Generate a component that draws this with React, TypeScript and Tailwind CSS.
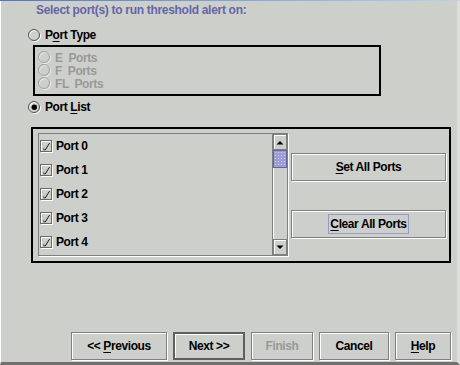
import React from 'react';

const ports = ['Port 0', 'Port 1', 'Port 2', 'Port 3', 'Port 4'];

function Radio({ checked = false, disabled = false }: { checked?: boolean; disabled?: boolean }) {
  const dark = disabled ? '#9c9c9c' : '#505050';
  const light = disabled ? '#f0f0f0' : '#ffffff';
  return (
    <svg width="13" height="13" viewBox="0 0 13 13" className="shrink-0">
      <circle cx="7" cy="7" r="5.5" fill="none" stroke={light} strokeWidth="1" />
      <circle cx="6" cy="6" r="5.5" fill="none" stroke={dark} strokeWidth="1" />
      {checked && <circle cx="6.3" cy="6.3" r="2.7" fill="#000" />}
    </svg>
  );
}

function CheckBox() {
  return (
    <svg width="13" height="13" viewBox="0 0 13 13" className="shrink-0">
      <rect x="1.5" y="1.5" width="11" height="11" fill="none" stroke="#ffffff" />
      <rect x="0.5" y="0.5" width="11" height="11" fill="none" stroke="#6a6a6a" />
      <path d="M3 6 L3 9.5 L5 9.5 L9.2 3 L10 3 L5.5 10.2 L3.5 10.2 Z" fill="#000" />
    </svg>
  );
}

function U({ children }: { children: React.ReactNode }) {
  return <span className="underline underline-offset-2">{children}</span>;
}

function Btn({
  children,
  w,
  disabled = false,
  primary = false,
}: {
  children: React.ReactNode;
  w: string;
  disabled?: boolean;
  primary?: boolean;
}) {
  return (
    <div
      className={`${w} h-[28px] flex items-center justify-center text-[12px] font-bold tracking-[-0.4px] ${
        primary
          ? 'border-2 border-[#5f5f5f] shadow-[inset_1px_1px_0_#fff]'
          : 'border border-[#7f7f7f] shadow-[inset_1px_1px_0_#fff,1px_1px_0_#fff]'
      } ${disabled ? 'text-[#999999]' : 'text-black'}`}
    >
      {children}
    </div>
  );
}

function ArrowBtn({ up }: { up: boolean }) {
  return (
    <div className="h-[16px] flex items-center justify-center border border-[#7f7f7f] shadow-[inset_1px_1px_0_#fff]">
      <svg width="8" height="5" viewBox="0 0 8 5">
        {up ? <path d="M0.5 4.5 L4 1 L7.5 4.5 Z" fill="#000" /> : <path d="M0.5 0.5 L4 4 L7.5 0.5 Z" fill="#000" />}
      </svg>
    </div>
  );
}

export default function App() {
  return (
    <div className="w-[460px] h-[365px] bg-[#cdcfcb] flex flex-col font-['Liberation_Sans',Arial,sans-serif] leading-[14px] text-black overflow-hidden">
      <div className="h-px w-[456px] bg-gradient-to-r from-[#5676bd] to-[#b9d0f0]" />

      <div className="flex-1 flex flex-col border-l border-white border-r-[3px] border-r-[#dddfdb] border-b-[3px] border-b-[#707070] pt-[2px]">
        {/* Title */}
        <div className="ml-[35px] text-[12px] font-bold tracking-[-0.3px] text-[#6565a9]">
          Select port(s) to run threshold alert on:
        </div>

        {/* Port Type */}
        <div className="ml-[27px] mt-[11px] h-[14px] flex items-center gap-[4px] text-[12px] font-bold tracking-[-0.4px]">
          <Radio />
          <span>
            P<U>o</U>rt Type
          </span>
        </div>

        <div className="ml-[32px] mt-[3px] w-[348px] h-[51px] border-2 border-black pt-[4px] pl-[3px]">
          {['E  Ports', 'F  Ports', 'FL  Ports'].map(t => (
            <div key={t} className="h-[13px] flex items-center gap-[4px] text-[12px] font-bold tracking-[-0.4px] text-[#999999]">
              <Radio disabled />
              <span className="whitespace-pre">{t}</span>
            </div>
          ))}
        </div>

        {/* Port List */}
        <div className="ml-[27px] mt-[4px] h-[14px] flex items-center gap-[4px] text-[12px] font-bold tracking-[-0.4px]">
          <Radio checked />
          <span>
            Port <U>L</U>ist
          </span>
        </div>

        <div className="ml-[30px] mt-[13px] w-[420px] h-[136px] border-2 border-black flex pt-[4px] pl-[5px] pr-[3px]">
          {/* list */}
          <div className="w-[251px] h-[123px] flex border border-[#7f7f7f] shadow-[1px_1px_0_#fff]">
            <div className="flex-1">
              {ports.map(p => (
                <div key={p} className="h-[24px] flex items-center gap-[3px] pl-px text-[12px] font-bold tracking-[-0.4px]">
                  <CheckBox />
                  <span>{p}</span>
                </div>
              ))}
            </div>
            <div className="w-[15px] flex flex-col border-l border-[#7f7f7f]">
              <ArrowBtn up />
              <div className="flex-1 flex flex-col">
                <div className="h-[18px] border border-[#666699] bg-[#9d9dd6] bg-[radial-gradient(#d4d4ff_0.6px,transparent_0.8px)] bg-[length:3px_3px]" />
                <div className="flex-1 shadow-[inset_1px_0_0_#fff]" />
              </div>
              <ArrowBtn up={false} />
            </div>
          </div>

          {/* buttons */}
          <div className="flex-1 flex flex-col pl-[3px] pt-[20px] gap-[29px]">
            <Btn w="w-[155px]">
              <span>
                <U>S</U>et All Ports
              </span>
            </Btn>
            <Btn w="w-[155px]">
              <span className="outline outline-1 outline-[#9999cc] px-px leading-[18px]">
                <U>C</U>lear All Ports
              </span>
            </Btn>
          </div>
        </div>

        {/* footer */}
        <div className="mt-auto mb-[2px] mr-[6px] flex justify-end gap-[6px]">
          <Btn w="w-[96px]">
            <span>
              &lt;&lt; <U>P</U>revious
            </span>
          </Btn>
          <Btn w="w-[72px]" primary>
            <span>Next &gt;&gt;</span>
          </Btn>
          <Btn w="w-[62px]" disabled>
            Finish
          </Btn>
          <Btn w="w-[70px]">Cancel</Btn>
          <Btn w="w-[56px]">
            <span>
              <U>H</U>elp
            </span>
          </Btn>
        </div>
      </div>
    </div>
  );
}
